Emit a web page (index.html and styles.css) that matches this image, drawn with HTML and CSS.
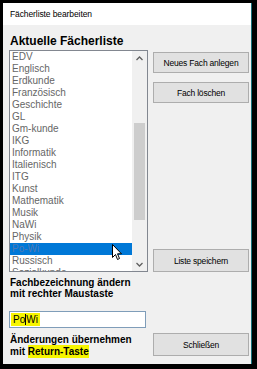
FILE: index.html
```html
<!DOCTYPE html>
<html lang="de">
<head>
<meta charset="utf-8">
<title>Fächerliste bearbeiten</title>
<link rel="stylesheet" href="styles.css">
</head>
<body>
<div class="window">
  <div class="titlebar">Fächerliste bearbeiten</div>
  <div class="content">
    <div class="left">
      <div class="heading">Aktuelle Fächerliste</div>
      <div class="listbox">
        <ul class="items">
          <li>EDV</li>
          <li>Englisch</li>
          <li>Erdkunde</li>
          <li>Französisch</li>
          <li>Geschichte</li>
          <li>GL</li>
          <li>Gm-kunde</li>
          <li>IKG</li>
          <li>Informatik</li>
          <li>Italienisch</li>
          <li>ITG</li>
          <li>Kunst</li>
          <li>Mathematik</li>
          <li>Musik</li>
          <li>NaWi</li>
          <li>Physik</li>
          <li class="selected">Po-Wi</li>
          <li>Russisch</li>
          <li>Sozialkunde</li>
        </ul>
        <div class="scrollbar">
          <div class="arrow"><svg width="7" height="5" viewBox="0 0 7 5"><path d="M0.5 4 L3.5 1 L6.5 4" fill="none" stroke="#606060" stroke-width="1.3"/></svg></div>
          <div class="thumb"></div>
          <div class="arrow down"><svg width="7" height="5" viewBox="0 0 7 5"><path d="M0.5 1 L3.5 4 L6.5 1" fill="none" stroke="#606060" stroke-width="1.3"/></svg></div>
        </div>
        <svg class="pointer" width="11" height="17" viewBox="0 0 11 17"><path d="M0.5 0.5 L0.5 13.5 L3.5 10.5 L5.5 15.5 L7.5 14.5 L5.5 9.8 L9.5 9.8 Z" fill="#fff" stroke="#000" stroke-width="1"/></svg>
      </div>
      <div class="label">Fachbezeichnung ändern<br>mit rechter Maustaste</div>
      <div class="input"><span class="mark">Po<span class="caret"></span>Wi</span></div>
      <div class="label label2">Änderungen übernehmen<br>mit <span class="hl">Return-Taste</span></div>
    </div>
    <div class="right">
      <div class="btn b1">Neues Fach anlegen</div>
      <div class="btn b2">Fach löschen</div>
      <div class="btn b3">Liste speichern</div>
      <div class="btn b4">Schließen</div>
    </div>
  </div>
</div>
</body>
</html>
```

FILE: styles.css
```css
html, body {
  margin: 0;
  padding: 0;
}
body {
  background: #000;
  width: 257px;
  height: 369px;
  overflow: hidden;
  font-family: "Liberation Sans", Arial, sans-serif;
}
.window {
  margin: 3px 0 0 3px;
  width: 248px;
  height: 361px;
  border-right: 1px solid #17707a;
  background: #f0f0f0;
  display: flex;
  flex-direction: column;
}
.titlebar {
  height: 22px;
  flex: none;
  background: #fff;
  padding-left: 7px;
  display: flex;
  align-items: center;
  font-size: 8.5px;
  letter-spacing: -0.1px;
  color: #000;
}
.content {
  display: flex;
  gap: 5px;
  padding-left: 6px;
}
.left {
  width: 139px;
  display: flex;
  flex-direction: column;
}
.heading {
  height: 25px;
  box-sizing: border-box;
  display: flex;
  align-items: flex-end;
  padding: 0 0 2px 1px;
  font-weight: bold;
  font-size: 12px;
  line-height: 14px;
  color: #000;
}
.listbox {
  position: relative;
  height: 222px;
  box-sizing: border-box;
  border: 1px solid #828790;
  background: #fff;
  display: flex;
  overflow: hidden;
}
.items {
  list-style: none;
  margin: 0;
  padding: 0;
  flex: 1;
}
.items li {
  height: 12px;
  line-height: 12px;
  padding-left: 2px;
  font-size: 10px;
  color: #666;
  white-space: nowrap;
}
.items li.selected {
  background: #0078d7;
  color: #4f79b3;
}
.scrollbar {
  width: 15px;
  flex: none;
  background: #f0f0f0;
  display: flex;
  flex-direction: column;
}
.arrow {
  height: 14px;
  display: flex;
  align-items: center;
  justify-content: center;
}
.arrow.down {
  margin-top: auto;
}
.thumb {
  margin: 58px 2px 0 2px;
  height: 97px;
  background: #cdcdcd;
}
.pointer {
  position: absolute;
  left: 102px;
  top: 193px;
}
.label {
  margin-top: 5px;
  padding-left: 1px;
  font-weight: bold;
  font-size: 10px;
  line-height: 11px;
  color: #000;
}
.input {
  margin-top: 12px;
  width: 137px;
  height: 17px;
  box-sizing: border-box;
  border: 1px solid #7f9db9;
  background: #fff;
  display: flex;
  align-items: flex-start;
}
.mark {
  display: flex;
  align-items: center;
  height: 13px;
  margin: 1px 0 0 1px;
  padding: 0 2px;
  background: #f7f500;
  font-size: 10px;
  color: #000;
}
.caret {
  display: inline-block;
  width: 1px;
  height: 11px;
  background: #000;
}
.label2 {
  margin-top: 6px;
  line-height: 12px;
}
.hl {
  background: #f7f500;
  padding: 1px 0 1px 0;
}
.right {
  width: 96px;
  display: flex;
  flex-direction: column;
}
.btn {
  box-sizing: border-box;
  border: 1px solid #adadad;
  background: #e1e1e1;
  display: flex;
  align-items: center;
  justify-content: center;
  font-size: 8.5px;
  letter-spacing: -0.2px;
  color: #000;
}
.b1 { margin-top: 27px; height: 21px; }
.b2 { margin-top: 9px; height: 21px; }
.b3 { margin-top: 146px; height: 23px; }
.b4 { margin-top: 61px; height: 23px; }
```
